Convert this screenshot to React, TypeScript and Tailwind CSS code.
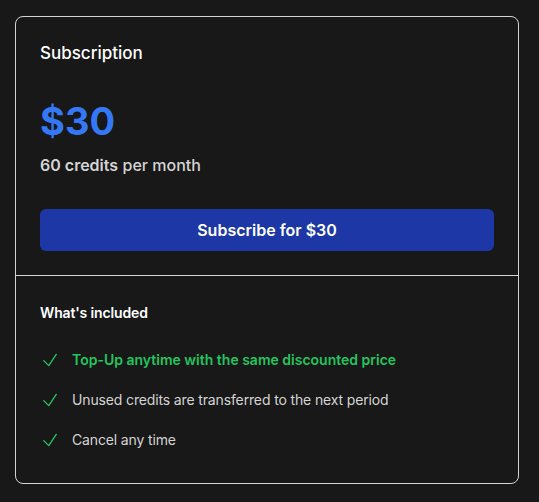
const features = [
  { text: 'Top-Up anytime with the same discounted price', highlight: true },
  { text: 'Unused credits are transferred to the next period', highlight: false },
  { text: 'Cancel any time', highlight: false },
]

function CheckIcon() {
  return (
    <svg viewBox="0 0 24 24" fill="none" stroke="currentColor" strokeWidth={1.6} className="h-5 w-5 shrink-0 text-[#22c55e]">
      <path strokeLinecap="round" strokeLinejoin="round" d="m4.5 12.75 6 6 9-13.5" />
    </svg>
  )
}

export default function App() {
  return (
    <div className="min-h-[502px] bg-[#181818] px-[15px] pt-4 font-['Inter',sans-serif]">
      <div className="w-[504px] overflow-hidden rounded-lg border border-[#d4d4d4] bg-[#181818]">
        {/* Plan header */}
        <div className="flex flex-col p-6">
          <h2 className="text-[17px] font-medium leading-6 text-white">Subscription</h2>
          <p className="mt-9 text-[38px] font-bold leading-10 text-[#3478f6]">$30</p>
          <p className="mt-3 text-base leading-6 text-[#d4d4d4]">
            <span className="font-semibold">60 credits</span> <span className="font-medium">per month</span>
          </p>
          <button className="mt-8 h-[42px] w-full rounded-md bg-[#1e37a6] text-base font-semibold text-white">
            Subscribe for $30
          </button>
        </div>

        {/* Included features */}
        <div className="border-t border-[#d4d4d4] px-6 pb-[33px] pt-[27px]">
          <h3 className="text-sm font-semibold leading-5 tracking-[-0.01em] text-white">What's included</h3>
          <ul className="mt-[27px] flex flex-col gap-5">
            {features.map((f) => (
              <li key={f.text} className="flex items-center gap-3 text-sm leading-5">
                <CheckIcon />
                <span
                  className={
                    f.highlight
                      ? 'font-semibold text-[#22c55e]'
                      : 'tracking-[-0.01em] text-[#d4d4d4]'
                  }
                >
                  {f.text}
                </span>
              </li>
            ))}
          </ul>
        </div>
      </div>
    </div>
  )
}
